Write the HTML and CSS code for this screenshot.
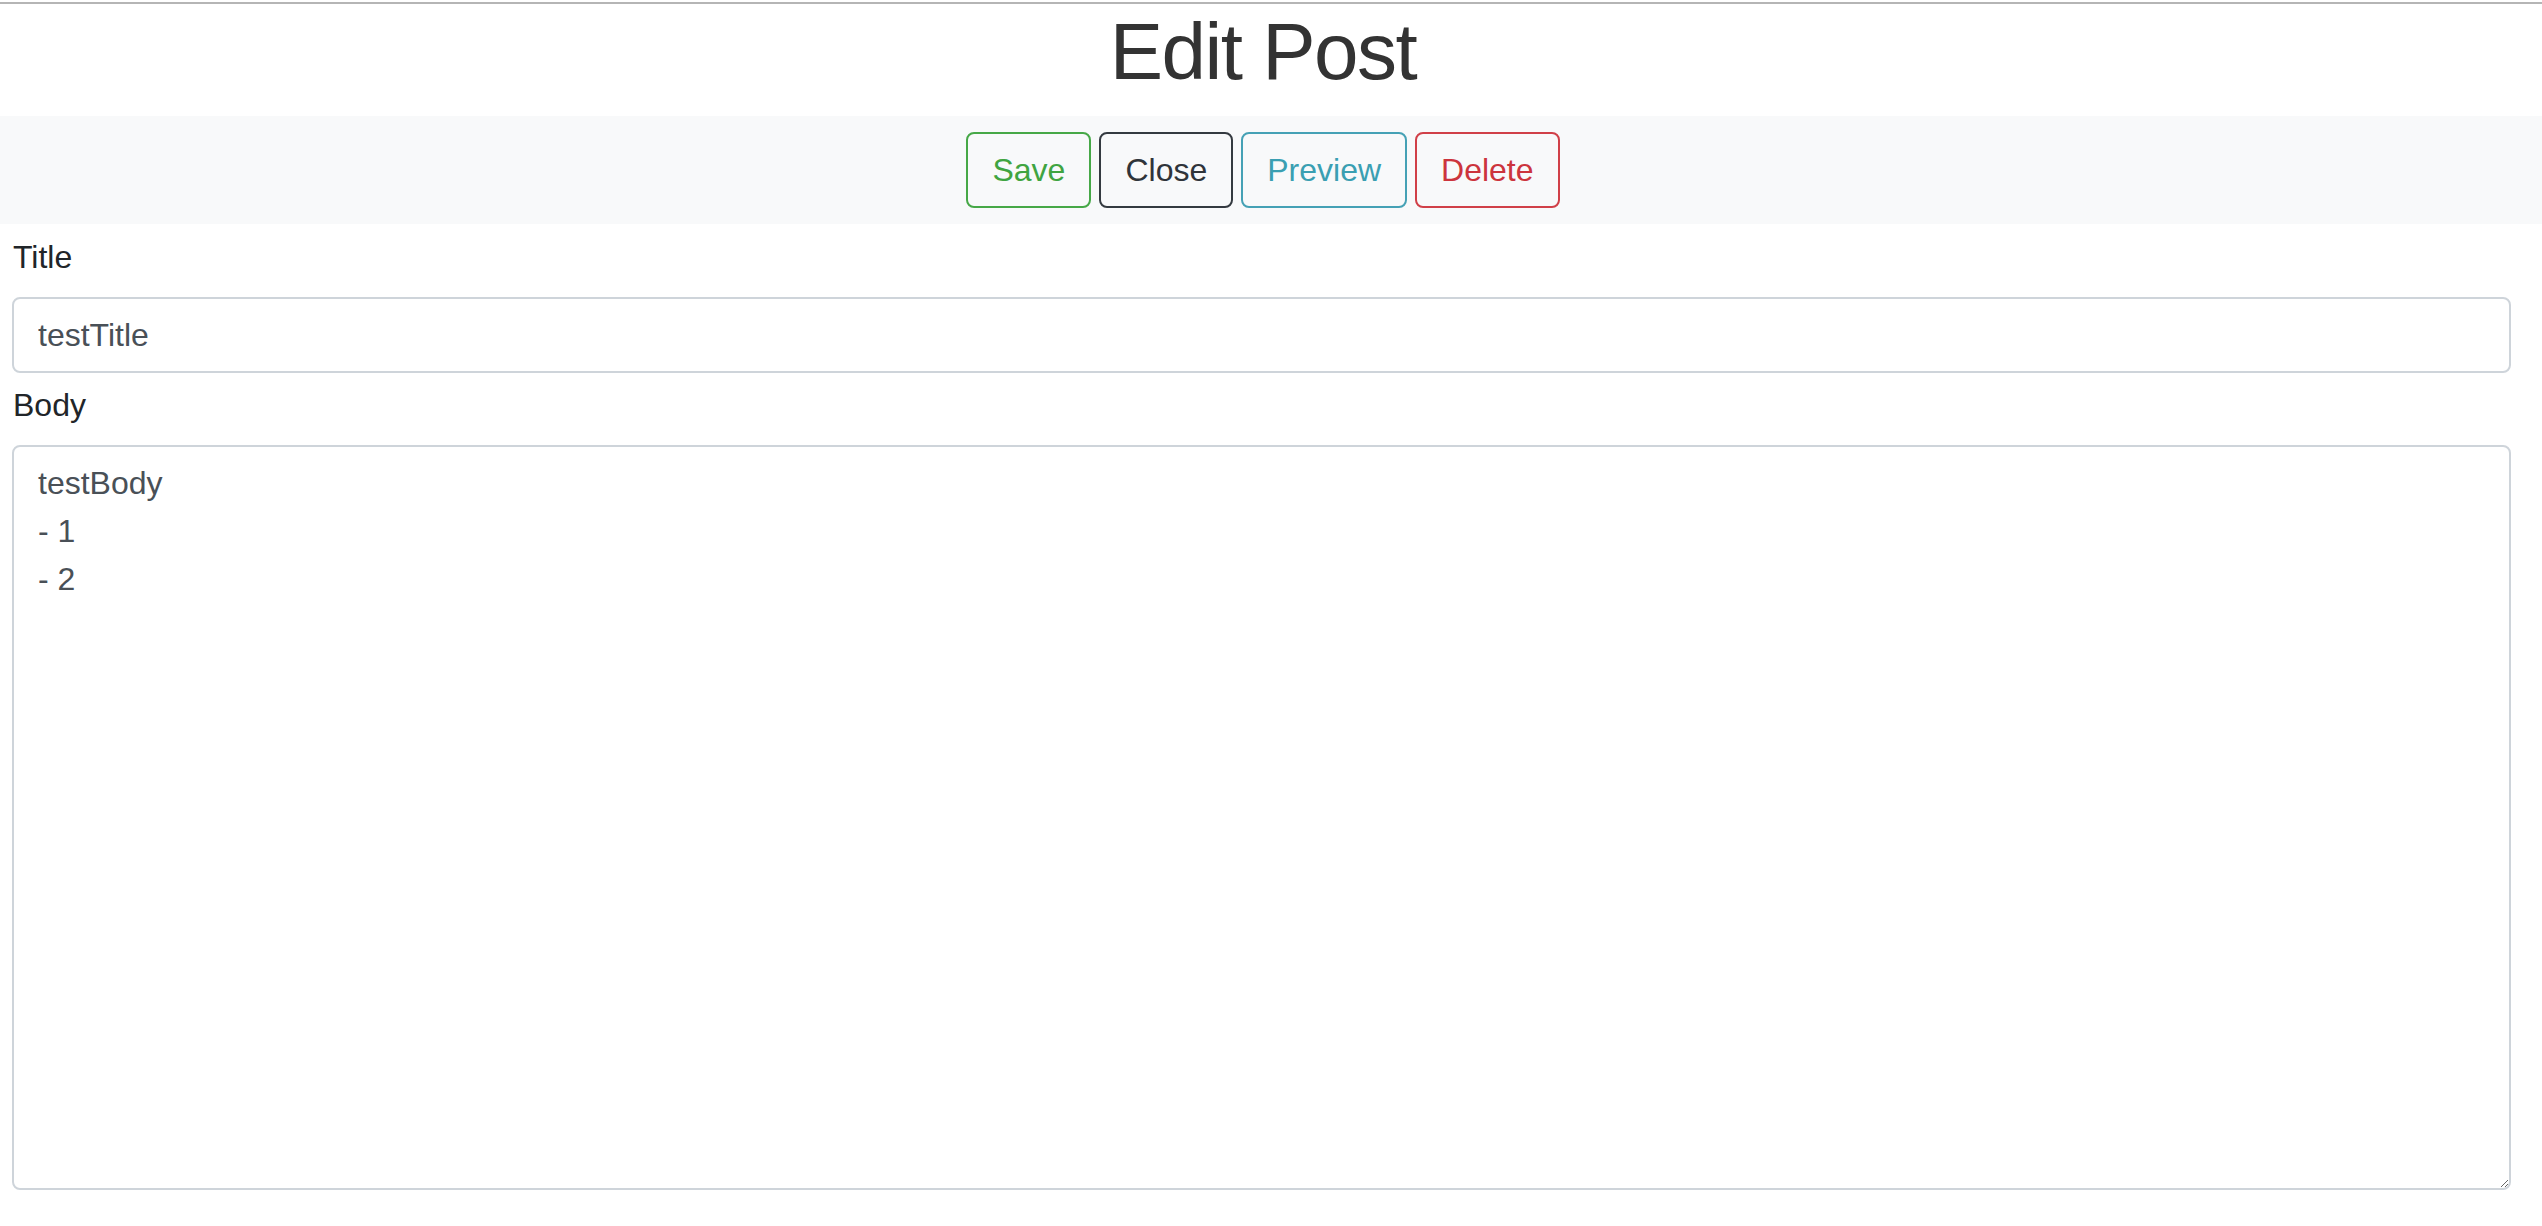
FILE: index.html
```html
<!DOCTYPE html>
<html lang="en">
<head>
<meta charset="utf-8">
<title>Edit Post</title>
<link rel="stylesheet" href="styles.css">
</head>
<body>
<div class="topline"></div>
<h1 class="page-title">Edit Post</h1>
<div class="toolbar">
  <button class="btn btn-save">Save</button>
  <button class="btn btn-close">Close</button>
  <button class="btn btn-preview">Preview</button>
  <button class="btn btn-delete">Delete</button>
</div>
<form class="post-form">
  <label class="field-label" for="title">Title</label>
  <input class="field-input" id="title" type="text" value="testTitle">
  <label class="field-label body-label" for="body">Body</label>
  <textarea class="field-input field-area" id="body">testBody
- 1
- 2</textarea>
</form>
</body>
</html>
```

FILE: styles.css
```css
html, body {
  margin: 0;
  padding: 0;
  background: #ffffff;
}

body {
  font-family: "Liberation Sans", Arial, Helvetica, sans-serif;
  color: #212529;
  font-size: 32px;
  line-height: 48px;
}

.topline {
  margin-top: 2px;
  height: 2px;
  background: #b5b5b5;
}

.page-title {
  margin: 0 0 16px 0;
  padding-right: 16px;
  font-size: 80px;
  line-height: 96px;
  font-weight: 400;
  letter-spacing: -1.5px;
  color: #333333;
  text-align: center;
}

.toolbar {
  display: flex;
  justify-content: center;
  gap: 8px;
  padding: 16px 16px 16px 0;
  background: #f8f9fa;
}

.btn {
  font-family: "Liberation Sans", Arial, Helvetica, sans-serif;
  font-size: 32px;
  line-height: 48px;
  padding: 12px 24px;
  border: 2px solid;
  border-radius: 8px;
  background: transparent;
  cursor: pointer;
}

.btn-save {
  color: #3fa441;
  border-color: #46a847;
}

.btn-close {
  color: #2f343a;
  border-color: #343a40;
}

.btn-preview {
  color: #3a9fb2;
  border-color: #45a1b5;
}

.btn-delete {
  color: #cc343d;
  border-color: #d04048;
}

.post-form {
  display: flex;
  flex-direction: column;
  padding: 9px 31px 0 12px;
}

.field-label {
  display: block;
  margin-bottom: 16px;
  padding-left: 1px;
  color: #212529;
}

.body-label {
  margin-top: 8px;
}

.field-input {
  box-sizing: border-box;
  width: 100%;
  height: 76px;
  margin: 0;
  padding: 12px 24px;
  font-family: "Liberation Sans", Arial, Helvetica, sans-serif;
  font-size: 32px;
  line-height: 48px;
  color: #495057;
  background: #ffffff;
  border: 2px solid #ced4da;
  border-radius: 8px;
  outline: none;
}

.field-area {
  height: 745px;
  resize: vertical;
  display: block;
}
```
